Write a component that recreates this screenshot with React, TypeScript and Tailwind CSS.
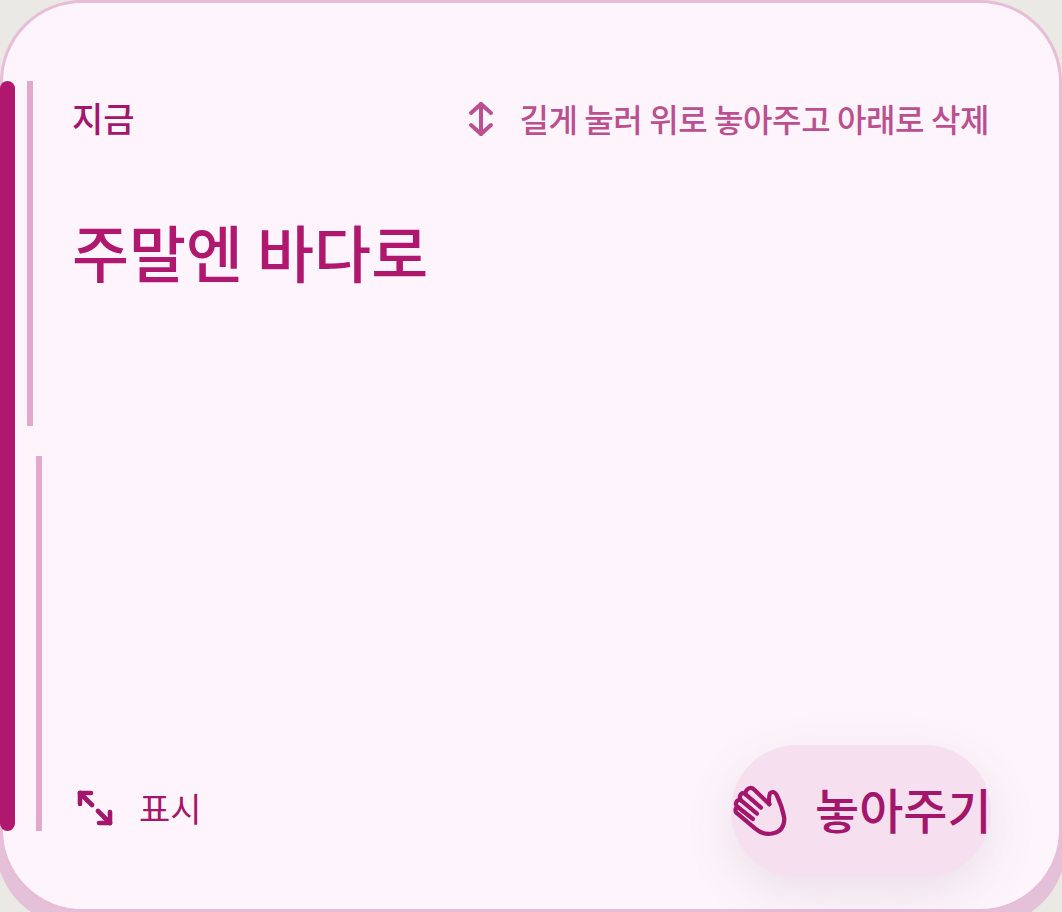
const font = { fontFamily: '"Noto Sans CJK KR", "Noto Sans", sans-serif' };

function UpDownIcon() {
  return (
    <svg className="mt-[2px]" width="26" height="36" viewBox="0 0 26 36" fill="none" stroke="currentColor" strokeWidth="4" strokeLinecap="round" strokeLinejoin="round">
      <path d="M3 12L13 3l10 9" />
      <path d="M13 3v30" />
      <path d="M3 24l10 9 10-9" />
    </svg>
  );
}

function ExpandIcon() {
  return (
    <svg width="36" height="36" viewBox="0 0 36 36" fill="none" stroke="currentColor" strokeWidth="4.6" strokeLinecap="round" strokeLinejoin="round">
      <path d="M3 14V3h11" />
      <path d="M3 3l12 12" />
      <path d="M21 21l12 12" />
      <path d="M33 22v11H22" />
    </svg>
  );
}

function HandIcon() {
  return (
    <svg className="shrink-0" width="56" height="56" viewBox="24 24 168 168" fill="none" stroke="currentColor" strokeWidth="12.5" strokeLinecap="round" strokeLinejoin="round">
      <path d="M133 88L88 44Q76 33 66 44Q60 50 62 58" />
      <path d="M62 58l46 40" />
      <path d="M62 58Q52 50 46 60Q42 68 48 76" />
      <path d="M48 76l48 40" />
      <path d="M48 76Q36 72 33 84Q31 90 38 96" />
      <path d="M38 96l46 36" />
      <path d="M38 96Q28 100 33 112L90 160Q115 182 145 175Q178 168 178 130Q172 95 155 60Q145 45 135 55Q130 65 133 88" />
    </svg>
  );
}

export default function App() {
  return (
    <div className="relative h-[912px] w-[1062px] overflow-hidden bg-[#ebe9e3]" style={font}>
      {/* layer peeking out under the card */}
      <div className="absolute -inset-x-[4px] -bottom-[14px] h-[300px] rounded-b-[80px] bg-[#e5c1d9]" />

      <div className="relative flex h-[912px] w-[1062px] rounded-[82px] border-[3px] border-[#e7bdd8] bg-[#fef5fc]">
        <div className="ml-[-3px] mt-[78px] h-[750px] w-[15px] shrink-0 rounded-lg bg-[#b0186f]" />

        <div className="ml-[12px] mt-[78px] flex h-[750px] w-[15px] shrink-0 flex-col">
          <div className="h-[345px] w-[6px] bg-[#e3a9cd]" />
          <div className="ml-[9px] mt-[30px] h-[375px] w-[6px] bg-[#e3a9cd]" />
        </div>

        <div className="flex min-w-0 flex-1 flex-col pt-[93px] pb-[32px] pl-[30px] pr-[70px]">
          <div className="flex items-center justify-between">
            <span className="text-[34px] font-medium leading-[44px] text-[#a3166c]">지금</span>
            <div className="flex items-center gap-[25px] text-[#bc4f90]">
              <UpDownIcon />
              <span className="whitespace-nowrap text-[32px] font-medium leading-[44px] tracking-[-0.4px]">길게 눌러 위로 놓아주고 아래로 삭제</span>
            </div>
          </div>

          <h1 className="mt-[68px] text-[62px] font-medium leading-[86px] text-[#b0186f]">주말엔 바다로</h1>

          <div className="mt-auto flex items-center justify-between">
            <div className="-mt-[6px] flex items-center gap-[26px] pl-[5px] text-[#a3166c]">
              <ExpandIcon />
              <span className="text-[34px] font-normal leading-[44px]">표시</span>
            </div>

            <button className="-mr-[2px] flex h-[132px] w-[260px] shrink-0 items-center gap-[26px] rounded-[66px] bg-[#f6e0ef] pl-[2px] text-[#a3166c] shadow-[0_16px_50px_rgba(90,70,80,0.12)]">
              <HandIcon />
              <span className="-mt-[6px] whitespace-nowrap text-[48px] font-medium leading-[72px]">놓아주기</span>
            </button>
          </div>
        </div>
      </div>
    </div>
  );
}
